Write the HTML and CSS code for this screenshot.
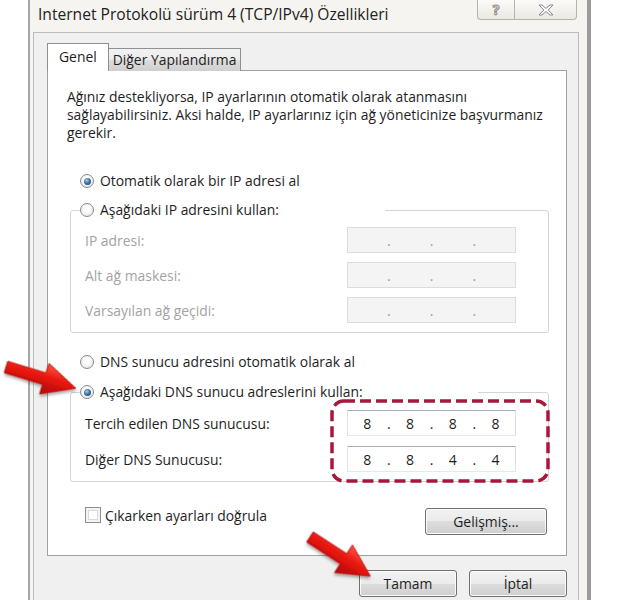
FILE: index.html
```html
<!DOCTYPE html>
<html lang="tr">
<head>
    <meta charset="UTF-8">
    <meta name="viewport" content="width=device-width, initial-scale=1.0">
    <title>Internet Protokolü sürüm 4 (TCP/IPv4) Özellikleri</title>
    <link rel="stylesheet" href="styles.css">
</head>
<body>
    <div class="page">
        <div class="window">
            <div class="titlebar">
                <span class="title">Internet Protokolü sürüm 4 (TCP/IPv4) Özellikleri</span>
                <div class="caption-buttons">
                    <span class="caption-btn help">?</span>
                    <span class="caption-btn close">
                        <svg width="16" height="12" viewBox="-8 -6 16 12">
                            <polygon points="-7,-5 -4,-5 0,-1.6 4,-5 7,-5 2.2,0 7,5 4,5 0,1.6 -4,5 -7,5 -2.2,0" fill="#fafafa" stroke="#8a8a8a" stroke-width="1"/>
                        </svg>
                    </span>
                </div>
            </div>

            <div class="client">
                <div class="tabs">
                    <span class="tab active">Genel</span>
                    <span class="tab">Diğer Yapılandırma</span>
                </div>

                <div class="panel">
                    <p class="intro">Ağınız destekliyorsa, IP ayarlarının otomatik olarak atanmasını<br>sağlayabilirsiniz. Aksi halde, IP ayarlarınız için ağ yöneticinize başvurmanız<br>gerekir.</p>

                    <label class="option first"><span class="radio checked"></span>Otomatik olarak bir IP adresi al</label>

                    <fieldset class="group disabled">
                        <legend class="ip-legend"><span class="option"><span class="radio"></span>Aşağıdaki IP adresini kullan:</span></legend>
                        <div class="fields">
                            <div class="field">
                                <span class="field-label">IP adresi:</span>
                                <span class="ip-box"><span class="octet"></span><span class="dot">.</span><span class="octet"></span><span class="dot">.</span><span class="octet"></span><span class="dot">.</span><span class="octet"></span></span>
                            </div>
                            <div class="field">
                                <span class="field-label">Alt ağ maskesi:</span>
                                <span class="ip-box"><span class="octet"></span><span class="dot">.</span><span class="octet"></span><span class="dot">.</span><span class="octet"></span><span class="dot">.</span><span class="octet"></span></span>
                            </div>
                            <div class="field">
                                <span class="field-label">Varsayılan ağ geçidi:</span>
                                <span class="ip-box"><span class="octet"></span><span class="dot">.</span><span class="octet"></span><span class="dot">.</span><span class="octet"></span><span class="dot">.</span><span class="octet"></span></span>
                            </div>
                        </div>
                    </fieldset>

                    <label class="option dns-auto"><span class="radio"></span>DNS sunucu adresini otomatik olarak al</label>

                    <fieldset class="group dns-group">
                        <legend class="dns-legend"><span class="option"><span class="radio checked"></span>Aşağıdaki DNS sunucu adreslerini kullan:</span></legend>
                        <div class="fields">
                            <div class="field">
                                <span class="field-label">Tercih edilen DNS sunucusu:</span>
                                <span class="ip-box"><span class="octet">8</span><span class="dot">.</span><span class="octet">8</span><span class="dot">.</span><span class="octet">8</span><span class="dot">.</span><span class="octet">8</span></span>
                            </div>
                            <div class="field">
                                <span class="field-label">Diğer DNS Sunucusu:</span>
                                <span class="ip-box"><span class="octet">8</span><span class="dot">.</span><span class="octet">8</span><span class="dot">.</span><span class="octet">4</span><span class="dot">.</span><span class="octet">4</span></span>
                            </div>
                        </div>
                    </fieldset>

                    <div class="panel-footer">
                        <label class="check-option"><span class="checkbox"></span>Çıkarken ayarları doğrula</label>
                        <button class="btn advanced">Gelişmiş...</button>
                    </div>
                </div>

                <div class="dialog-buttons">
                    <button class="btn">Tamam</button>
                    <button class="btn">İptal</button>
                </div>
            </div>
        </div>

        <!-- red annotations drawn over the dialog -->
        <svg class="annotations" width="618" height="600" viewBox="0 0 618 600">
            <defs>
                <linearGradient id="arrowFill" x1="0" y1="-17" x2="0" y2="17" gradientUnits="userSpaceOnUse">
                    <stop offset="0" stop-color="#ff5a48"/>
                    <stop offset="0.45" stop-color="#e8150f"/>
                    <stop offset="1" stop-color="#a90808"/>
                </linearGradient>
                <filter id="arrowShadow" x="-20%" y="-40%" width="150%" height="180%">
                    <feDropShadow dx="1" dy="2" stdDeviation="1.6" flood-color="#000" flood-opacity="0.35"/>
                </filter>
            </defs>
            <rect x="332" y="401" width="216" height="80" rx="12" fill="none" stroke="#a8173c" stroke-width="3.5" stroke-dasharray="11 5"/>
            <g transform="translate(6 367) rotate(17)" filter="url(#arrowShadow)">
                <polygon points="0,-6 40,-6 40,-16 73,0 40,16 40,6 0,6" fill="url(#arrowFill)" stroke="#b50c0c" stroke-width="0.8"/>
            </g>
            <g transform="translate(310 537) rotate(33)" filter="url(#arrowShadow)">
                <polygon points="0,-6 40,-6 40,-16.5 72,0 40,16.5 40,6 0,6" fill="url(#arrowFill)" stroke="#b50c0c" stroke-width="0.8"/>
            </g>
        </svg>
    </div>
</body>
</html>
```

FILE: styles.css
```css
* {
    margin: 0;
    padding: 0;
    box-sizing: border-box;
}

html, body {
    width: 618px;
    height: 600px;
    overflow: hidden;
}

body {
    background: #fff;
    font-family: "Open Sans", "Noto Sans", sans-serif;
    font-size: 13.9px;
    color: #1e1e1e;
}

.page {
    position: relative;
    width: 618px;
    height: 600px;
}

/* window frame */
.window {
    margin-left: 28px;
    width: 563px;
    height: 600px;
    background: #f6f4f0;
    border-left: 2px solid #a6a6a6;
    border-right: 4px solid #9b9b9b;
    padding: 0 8px 0 3px;
    display: flex;
    flex-direction: column;
}

.titlebar {
    height: 32px;
    flex: none;
    display: flex;
    justify-content: space-between;
    align-items: flex-start;
}

.title {
    padding: 5px 0 0 5px;
    font-size: 15.6px;
    line-height: 18px;
    color: #222;
    white-space: nowrap;
}

.caption-buttons {
    display: flex;
    margin-right: 2px;
}

.caption-btn {
    height: 20px;
    display: flex;
    align-items: center;
    justify-content: center;
    border: 1px solid #b7b2aa;
    border-top: none;
    background: linear-gradient(#fcfbf9, #ece8e2);
}

.caption-btn.help {
    width: 38px;
    border-radius: 0 0 0 4px;
    font-size: 14px;
    font-weight: 700;
    line-height: 16px;
    color: #f4f4f4;
    -webkit-text-stroke: 1px #8a8a8a;
}

.caption-btn.close {
    width: 62px;
    border-left: none;
    border-radius: 0 0 4px 0;
}

/* client area */
.client {
    flex: 1;
    background: #f0f0f0;
    border: 1px solid #bcbcbc;
    border-bottom: none;
    padding: 10px 11px 0 13px;
}

.tabs {
    height: 28px;
    margin-bottom: -1px;
    display: flex;
    align-items: flex-end;
    position: relative;
    z-index: 1;
}

.tab {
    height: 23px;
    padding: 0 4px;
    line-height: 21px;
    border: 1px solid #8e9096;
    border-left: none;
    border-bottom: none;
    background: linear-gradient(#f2f2f2 0%, #ebebeb 50%, #dddddd 50%, #cfcfcf 100%);
    color: #1e1e1e;
    white-space: nowrap;
}

.tab.active {
    height: 28px;
    padding: 0 11px;
    line-height: 26px;
    border-left: 1px solid #8e9096;
    background: #fff;
}

.panel {
    height: 486px;
    background: #fff;
    border: 1px solid #9fa1a5;
    padding: 0 17px 0 19px;
}

.intro {
    margin-top: 17px;
    line-height: 18px;
    white-space: nowrap;
}

/* radio / check controls */
.option {
    display: flex;
    align-items: center;
    height: 18px;
    line-height: 18px;
    white-space: nowrap;
}

.option.first {
    margin: 30px 0 0 13px;
}

.option.dns-auto {
    margin: 20px 0 0 13px;
}

.radio {
    flex: none;
    width: 14px;
    height: 14px;
    margin-right: 6px;
    border-radius: 50%;
    border: 1px solid #8a8a8a;
    background: radial-gradient(circle at 50% 40%, #ffffff 30%, #dcdcdc 100%);
    display: flex;
    align-items: center;
    justify-content: center;
}

.radio.checked::after {
    content: "";
    width: 7px;
    height: 7px;
    border-radius: 50%;
    background: radial-gradient(circle at 40% 35%, #a9cdef 0%, #3f75aa 45%, #13385f 100%);
}

.checkbox {
    flex: none;
    width: 16px;
    height: 16px;
    margin-right: 4px;
    border: 1px solid #8f8f8f;
    background: #fff;
    box-shadow: inset 0 0 0 2px #f4f4f4, inset 0 0 0 3px #dadada;
}

.check-option {
    display: flex;
    align-items: center;
    height: 18px;
    margin-left: 18px;
    white-space: nowrap;
}

/* group boxes */
.group {
    margin: 11px 0 0 3px;
    border: 1px solid #d5d5d5;
    border-radius: 3px;
    padding: 8px 32px 9px 9px;
    min-width: 0;
}

.group legend {
    padding: 0;
    height: 18px;
}

.ip-legend {
    width: 305px;
}

.dns-group {
    margin-top: 12px;
    padding-top: 9px;
}

.dns-legend {
    width: 398px;
}

.fields {
    display: flex;
    flex-direction: column;
    gap: 9px;
}

.dns-group .fields {
    gap: 10px;
}

.field {
    height: 26px;
    padding-left: 5px;
    display: flex;
    align-items: center;
    justify-content: space-between;
    white-space: nowrap;
}

.ip-box {
    width: 169px;
    height: 26px;
    display: flex;
    align-items: center;
    border: 1px solid #abadb3;
    border-color: #abadb3 #dbdfe6 #e3e9ef #e2e3ea;
    background: #fff;
    font-size: 14px;
}

.octet {
    flex: 1;
    text-align: center;
}

.dot {
    width: 4px;
    text-align: center;
}

.disabled .field-label {
    color: #a3a3a3;
}

.disabled .ip-box {
    background: #f4f4f4;
    border-color: #dcdcdc;
    color: #9a9a9a;
}

/* footer of the tab page */
.panel-footer {
    margin-top: 24px;
    display: flex;
    justify-content: space-between;
    align-items: flex-start;
}

.btn {
    width: 98px;
    height: 27px;
    font-family: inherit;
    font-size: 13.9px;
    color: #1e1e1e;
    border: 1px solid #707070;
    border-radius: 3px;
    background: linear-gradient(#f2f2f2 0%, #ebebeb 50%, #dddddd 50%, #cfcfcf 100%);
    box-shadow: inset 0 0 0 1px #fbfbfb;
}

.btn.advanced {
    width: 122px;
    margin: 2px 2px 0 0;
}

.dialog-buttons {
    margin-top: 14px;
    display: flex;
    justify-content: flex-end;
    gap: 12px;
}

.annotations {
    position: absolute;
    top: 0;
    left: 0;
    pointer-events: none;
}
```
